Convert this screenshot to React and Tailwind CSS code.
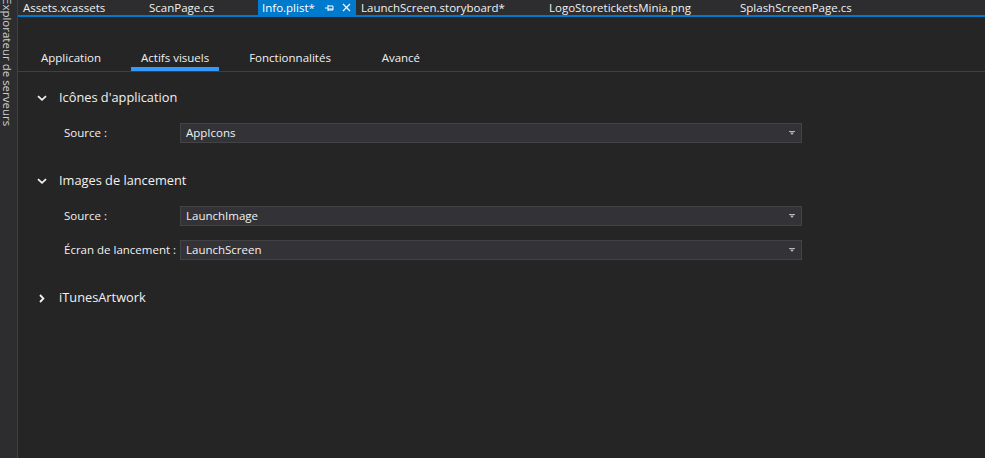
import React from 'react';

const docTabs = [
  { name: 'Assets.xcassets', w: 'w-[126px]' },
  { name: 'ScanPage.cs', w: 'w-[114px]' },
  { name: 'Info.plist*', w: 'w-[98px]', active: true },
  { name: 'LaunchScreen.storyboard*', w: 'w-[188px]' },
  { name: 'LogoStoreticketsMinia.png', w: 'w-[191px]' },
  { name: 'SplashScreenPage.cs', w: 'w-[191px]' },
];

const pageTabs = ['Application', 'Actifs visuels', 'Fonctionnalités', 'Avancé'];

function ChevronDown() {
  return (
    <svg width="10" height="6" viewBox="0 0 10 6" className="shrink-0">
      <path d="M1 1.2 5 4.8 9 1.2" fill="none" stroke="#f1f1f1" strokeWidth="1.8" />
    </svg>
  );
}

function ChevronRight() {
  return (
    <svg width="9" height="9" viewBox="0 0 9 9" className="shrink-0">
      <path d="M3 1 6.4 4.5 3 8" fill="none" stroke="#f1f1f1" strokeWidth="1.8" />
    </svg>
  );
}

function Select({ value }) {
  return (
    <div className="w-[622px] h-[20px] bg-[#333337] border border-[#434346] flex items-center justify-between pl-[5px] pr-[6px]">
      <span className="text-[11.5px] text-[#f1f1f1]">{value}</span>
      <svg width="6" height="4" viewBox="0 0 6 4">
        <path d="M0 0h6v1H0z" fill="#b4b4b4" />
        <path d="M1 1.5h4L3 4z" fill="#b4b4b4" />
      </svg>
    </div>
  );
}

function Row({ label, value, className = '' }) {
  return (
    <div className={`flex items-center pl-[46px] ${className}`}>
      <span className="w-[116px] text-[11.5px] text-[#f1f1f1]">{label}</span>
      <Select value={value} />
    </div>
  );
}

function Section({ title, open, className = '' }) {
  return (
    <div className={`h-[20px] flex items-center pl-[19px] ${className}`}>
      <div className="w-[22px] flex items-center">{open ? <ChevronDown /> : <ChevronRight />}</div>
      <span className="text-[12.8px] text-[#f1f1f1]">{title}</span>
    </div>
  );
}

export default function App() {
  return (
    <div className="w-[985px] h-[458px] flex bg-[#252526] overflow-hidden text-[#f1f1f1] font-['Open_Sans',sans-serif]">
      {/* left tool strip */}
      <div className="w-[18px] shrink-0 bg-[#2d2d30] border-r border-[#3f3f46] overflow-hidden">
        <div className="[writing-mode:vertical-rl] text-[11.5px] text-[#d0d0d0] -mt-[2px] ml-[-1px] leading-[17px] whitespace-nowrap">
          Explorateur de serveurs
        </div>
      </div>

      <div className="flex-1 flex flex-col min-w-0">
        {/* document tabs */}
        <div className="h-[15px] flex bg-[#2d2d30] shrink-0">
          {docTabs.map((t) => (
            <div
              key={t.name}
              className={`${t.w} shrink-0 h-full flex items-center text-[11.5px] leading-none whitespace-nowrap ${
                t.active ? 'bg-[#007acc] pl-[4px] text-white' : 'pl-[5px] text-[#f1f1f1]'
              }`}
            >
              <span>{t.name}</span>
              {t.active && (
                <div className="ml-auto flex items-center gap-[8px] pr-[5px]">
                  <svg width="9" height="8" viewBox="0 0 9 8">
                    <path d="M0 4h3M3 1v6M3 2h5v4H3M3 5h5" fill="none" stroke="#fff" strokeWidth="1" />
                  </svg>
                  <svg width="9" height="9" viewBox="0 0 9 9">
                    <path d="M1 1l7 7M8 1 1 8" stroke="#fff" strokeWidth="1.2" />
                  </svg>
                </div>
              )}
            </div>
          ))}
        </div>
        <div className="h-[2px] bg-[#007acc] shrink-0" />

        {/* page tabs */}
        <div className="flex gap-[20px] pl-[13px] pt-[33px] border-b border-[#3f3f46] shrink-0">
          {pageTabs.map((t, i) => (
            <div key={t} className="flex flex-col items-center min-w-[80px]">
              <span className="px-[10px] text-[11.5px] leading-[16px] whitespace-nowrap">{t}</span>
              <div className={`h-[4px] w-full mt-[1px] ${i === 1 ? 'bg-[#3399ff]' : ''}`} />
            </div>
          ))}
        </div>

        {/* content */}
        <div className="flex flex-col pt-[16px]">
          <Section title="Icônes d'application" open />
          <Row label="Source :" value="AppIcons" className="mt-[15px]" />
          <Section title="Images de lancement" open className="mt-[28px]" />
          <Row label="Source :" value="LaunchImage" className="mt-[15px]" />
          <Row label="Écran de lancement :" value="LaunchScreen" className="mt-[14px]" />
          <Section title="iTunesArtwork" className="mt-[28px]" />
        </div>
      </div>
    </div>
  );
}
